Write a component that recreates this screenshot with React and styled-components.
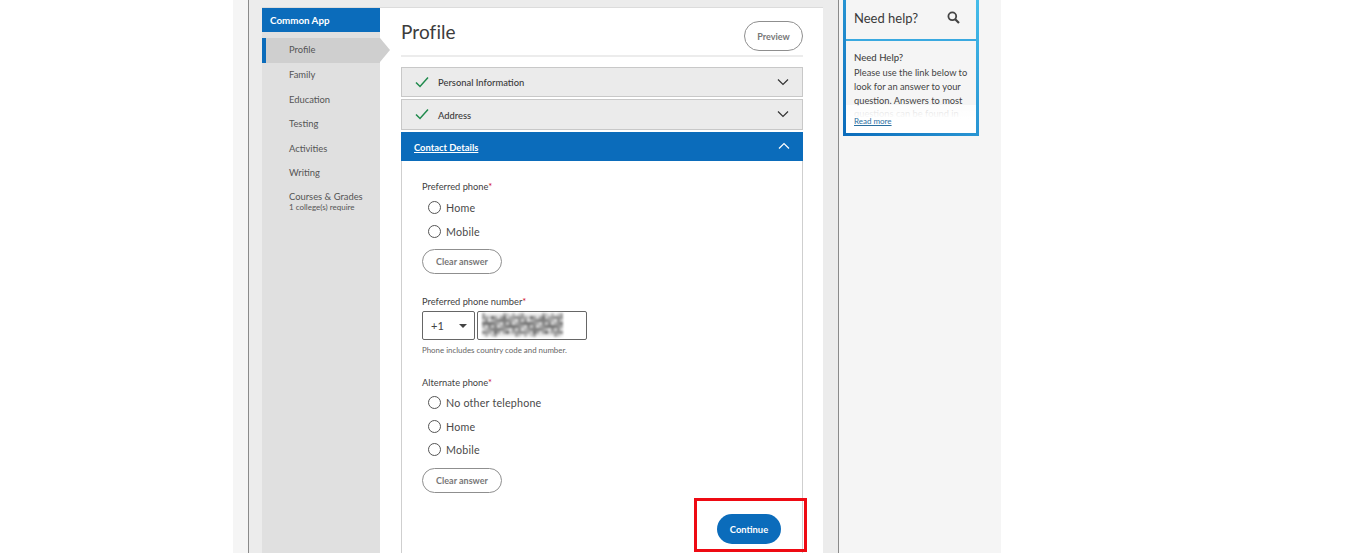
import React from "react"
import styled, { createGlobalStyle } from "styled-components"

const GlobalStyle = createGlobalStyle`
html, body {
  margin: 0;
  padding: 0;
  background: #fff;
  font-family: "Lato", "Liberation Sans", sans-serif;
  color: #3a3a3a;
}
* { box-sizing: border-box; }
`

const Page = styled.div`
width: 768px;
height: 553px;
margin-left: 233px;
display: flex;
overflow: hidden;
background: #f5f5f5;
`

const Gutter = styled.div`
width: 15px;
flex-shrink: 0;
`

const Main = styled.div`
width: 591px;
flex-shrink: 0;
background: #ececec;
border-left: 1px solid #8a8a8a;
border-right: 1px solid #8a8a8a;
padding: 8px 15px 0 13px;
`

const Card = styled.div`
display: flex;
height: 100%;
background: #fff;
box-shadow: 0 -1px 0 #dcdcdc;
`

const Sidebar = styled.nav`
width: 118px;
flex-shrink: 0;
background: #e0e0e0;
`

const SideHeader = styled.div`
height: 24px;
margin-bottom: 6px;
padding: 0 0 1px 8px;
display: flex;
align-items: center;
background: #0b6cbb;
color: #fff;
font-size: 9.8px;
font-weight: 700;
`

const SideItem = styled.div`
position: relative;
height: ${({ $tall }) => ($tall ? "33px" : "24.5px")};
padding-left: ${({ $active }) => ($active ? "23px" : "27px")};
padding-bottom: ${({ $active }) => ($active ? "1px" : "0")};
display: flex;
flex-direction: column;
justify-content: center;
font-size: 9.4px;
color: #555;
background: ${({ $active }) => ($active ? "#cfcfcf" : "transparent")};
border-left: ${({ $active }) => ($active ? "4px solid #0b6cbb" : "none")};

${({ $active }) => $active && `
  &::after {
    content: "";
    position: absolute;
    left: 100%;
    top: 0;
    border-left: 10px solid #cfcfcf;
    border-top: 12px solid transparent;
    border-bottom: 12px solid transparent;
  }
`}
`

const SideSub = styled.span`
font-size: 8px;
line-height: 10px;
`

const Content = styled.div`
flex: 1;
padding: 0 20px 0 21px;
display: flex;
flex-direction: column;
`

const TitleRow = styled.div`
height: 49px;
margin-bottom: 10px;
padding-top: 13px;
display: flex;
justify-content: space-between;
align-items: flex-start;
border-bottom: 2px solid #ececec;
`

const Title = styled.h1`
margin: 0;
font-size: 19px;
line-height: 21px;
font-weight: 400;
letter-spacing: 0.1px;
color: #3c3c3c;
`

const PillButton = styled.button`
height: ${({ $tall }) => ($tall ? "30px" : "25px")};
width: ${({ $wide }) => ($wide ? "80px" : "59px")};
padding: 0;
background: #fff;
border: 1px solid #8f8f8f;
border-radius: 15px;
font-family: inherit;
font-size: 9px;
font-weight: 700;
color: #777;
`

const AccordionRow = styled.div`
height: ${({ $h }) => $h}px;
margin-bottom: ${({ $open }) => ($open ? "0" : "2px")};
padding: 1px 13px 0;
display: flex;
align-items: center;
background: ${({ $open }) => ($open ? "#0b6cbb" : "#ebebeb")};
border: ${({ $open }) => ($open ? "none" : "1px solid #c8c8c8")};
color: ${({ $open }) => ($open ? "#fff" : "#3a3a3a")};
font-size: 9.4px;
font-weight: ${({ $open }) => ($open ? "700" : "500")};
`

const RowCheck = styled.svg`
width: 14px;
height: 12px;
margin: -2px 9px 0 0;
`

const RowLabel = styled.span`
flex: 1;
text-decoration: ${({ $open }) => ($open ? "underline" : "none")};
`

const Chevron = styled.svg`
width: 12px;
height: 8px;
margin-top: -2px;
`

const Panel = styled.div`
flex: 1;
padding: 20px 20px 0;
position: relative;
border-left: 1px solid #cfcfcf;
border-right: 1px solid #cfcfcf;
`

const FieldLabel = styled.div`
height: 12px;
line-height: 12px;
font-size: 9.3px;
color: #3f3f3f;
`

const Star = styled.span`
color: #d0112b;
`

const RadioList = styled.div`
padding: ${({ $top }) => $top}px 0 0 6px;
`

const RadioRow = styled.label`
height: 23.5px;
display: flex;
align-items: center;
gap: 5px;
font-size: 10.7px;
letter-spacing: 0.2px;
color: #4a4a4a;
`

const RadioDot = styled.span`
width: 13px;
height: 13px;
border: 1px solid #555;
border-radius: 50%;
background: #fff;
`

const ClearButton = styled(PillButton)`
display: block;
margin-top: 6px;
`

const PhoneGroup = styled.div`
margin-top: 22px;
`

const PhoneInputs = styled.div`
display: flex;
gap: 2px;
margin-top: 3px;
`

const CountrySelect = styled.div`
width: 53px;
height: 29px;
padding: 0 7px 0 8px;
display: flex;
align-items: center;
justify-content: space-between;
border: 1px solid #666;
border-radius: 2px;
font-size: 11px;
color: #444;
`

const Caret = styled.span`
border-top: 4px solid #444;
border-left: 4px solid transparent;
border-right: 4px solid transparent;
`

const PhoneField = styled.div`
width: 110px;
height: 29px;
padding: 1px 4px;
border: 1px solid #666;
border-radius: 2px;
`

const Mosaic = styled.svg`
display: block;
width: 81px;
height: 24px;
filter: blur(1px);
`

const Helper = styled.div`
margin-top: 6px;
font-size: 7.9px;
line-height: 9px;
color: #666;
`

const AltGroup = styled.div`
margin-top: 22px;
`

const Footer = styled.div`
position: absolute;
right: 21px;
top: 353px;
`

const ContinueButton = styled.button`
display: block;
width: 64px;
height: 30px;
padding: 0;
background: #0b6cbb;
border: none;
border-radius: 15px;
color: #fff;
font-family: inherit;
font-size: 9.4px;
font-weight: 700;
`

const Highlight = styled.div`
position: absolute;
left: -23px;
top: -16px;
width: 113px;
height: 54px;
border: 3px solid #ee0a13;
pointer-events: none;
`

const Aside = styled.aside`
flex: 1;
padding-left: 4px;
`

const HelpBox = styled.div`
width: 136px;
margin-top: -4px;
border: 3px solid;
border-image: linear-gradient(to top right, #0b6cbb, #45bdea) 1;
`

const HelpHead = styled.div`
height: 42px;
padding: 0 16px 3px 8px;
display: flex;
align-items: center;
justify-content: space-between;
border-bottom: 2px solid #3aa9e0;
font-size: 13px;
color: #3a3a3a;
`

const SearchIcon = styled.svg`
width: 13px;
height: 13px;
`

const HelpBody = styled.div`
height: 92px;
padding: 11px 3px 0 8px;
position: relative;
overflow: hidden;
font-size: 9.3px;
line-height: 13.8px;
color: #444;
`

const HelpTitle = styled.div`
font-weight: 500;
font-size: 9.6px;
line-height: 12px;
margin-bottom: 2px;
`

const Fade = styled.div`
position: absolute;
left: 0;
right: 0;
bottom: 0;
height: 28px;
padding: 0 0 7px 8px;
background: linear-gradient(to bottom, rgba(255,255,255,.75), #fff 50%);
display: flex;
align-items: flex-end;
`

const ReadMore = styled.a`
font-size: 8px;
line-height: 10px;
color: #2a6f9f;
text-decoration: underline;
`

const sideItems = ["Family", "Education", "Testing", "Activities", "Writing"]

// stand-in for the pixelated phone number
const mosaicCells = []
for (let y = 0; y < 8; y++) {
  for (let x = 0; x < 27; x++) {
    const n = (x * x * 7 + y * 31 + x * y * 5 + x * 3) % 13
    const edge = y === 0 || y === 7 ? 60 : 0
    mosaicCells.push({ x, y, shade: Math.min(235, 110 + n * 9 + edge) })
  }
}

function Check() {
  return (
    <RowCheck viewBox="0 0 14 12">
      <path d="M1 6.5 L5 10.5 L13 1.5" fill="none" stroke="#1f8a4c" strokeWidth="1.5" />
    </RowCheck>
  )
}

function Arrow({ up, color }) {
  return (
    <Chevron viewBox="0 0 12 8">
      <path d={up ? "M1 6.5 L6 1.5 L11 6.5" : "M1 1.5 L6 6.5 L11 1.5"} fill="none" stroke={color} strokeWidth="1.2" />
    </Chevron>
  )
}

function Radios({ items, top }) {
  return (
    <RadioList $top={top}>
      {items.map(item => (
        <RadioRow key={item}>
          <RadioDot />
          {item}
        </RadioRow>
      ))}
    </RadioList>
  )
}

export default function App() {
  return (
    <>
      <GlobalStyle />
      <Page>
        <Gutter />
        <Main>
          <Card>
            <Sidebar>
              <SideHeader>Common App</SideHeader>
              <SideItem $active>Profile</SideItem>
              {sideItems.map(item => (
                <SideItem key={item}>{item}</SideItem>
              ))}
              <SideItem $tall>
                Courses &amp; Grades
                <SideSub>1 college(s) require</SideSub>
              </SideItem>
            </Sidebar>
            <Content>
              <TitleRow>
                <Title>Profile</Title>
                <PillButton $tall>Preview</PillButton>
              </TitleRow>
              <AccordionRow $h={30}>
                <Check />
                <RowLabel>Personal Information</RowLabel>
                <Arrow color="#333" />
              </AccordionRow>
              <AccordionRow $h={31}>
                <Check />
                <RowLabel>Address</RowLabel>
                <Arrow color="#333" />
              </AccordionRow>
              <AccordionRow $open $h={29}>
                <RowLabel $open>Contact Details</RowLabel>
                <Arrow up color="#fff" />
              </AccordionRow>
              <Panel>
                <FieldLabel>Preferred phone<Star>*</Star></FieldLabel>
                <Radios top={3} items={["Home", "Mobile"]} />
                <ClearButton $wide>Clear answer</ClearButton>
                <PhoneGroup>
                  <FieldLabel>Preferred phone number<Star>*</Star></FieldLabel>
                  <PhoneInputs>
                    <CountrySelect>+1<Caret /></CountrySelect>
                    <PhoneField>
                      <Mosaic viewBox="0 0 81 24">
                        {mosaicCells.map(c => (
                          <rect
                            key={`${c.x}-${c.y}`}
                            x={c.x * 3}
                            y={c.y * 3}
                            width="3"
                            height="3"
                            fill={`rgb(${c.shade},${c.shade},${c.shade})`}
                          />
                        ))}
                      </Mosaic>
                    </PhoneField>
                  </PhoneInputs>
                  <Helper>Phone includes country code and number.</Helper>
                </PhoneGroup>
                <AltGroup>
                  <FieldLabel>Alternate phone<Star>*</Star></FieldLabel>
                  <Radios top={2} items={["No other telephone", "Home", "Mobile"]} />
                  <ClearButton $wide>Clear answer</ClearButton>
                </AltGroup>
                <Footer>
                  <ContinueButton>Continue</ContinueButton>
                  <Highlight />
                </Footer>
              </Panel>
            </Content>
          </Card>
        </Main>
        <Aside>
          <HelpBox>
            <HelpHead>
              Need help?
              <SearchIcon viewBox="0 0 13 13">
                <circle cx="5.3" cy="5.3" r="3.9" fill="none" stroke="#444" strokeWidth="1.8" />
                <path d="M8.2 8.2 L12 12" stroke="#444" strokeWidth="2.2" />
              </SearchIcon>
            </HelpHead>
            <HelpBody>
              <HelpTitle>Need Help?</HelpTitle>
              Please use the link below to look for an answer to your question. Answers to most questions can be found in
              <Fade>
                <ReadMore>Read more</ReadMore>
              </Fade>
            </HelpBody>
          </HelpBox>
        </Aside>
      </Page>
    </>
  )
}
